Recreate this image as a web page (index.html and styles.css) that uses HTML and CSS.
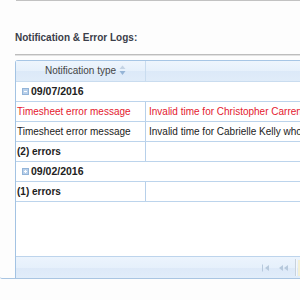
FILE: index.html
```html
<!DOCTYPE html>
<html lang="en">

<head>
  <meta charset="UTF-8">
  <title>Notification &amp; Error Logs</title>
  <link rel="stylesheet" href="styles.css">
</head>

<body>

  <div class="page">
    <div class="prev-rule"></div>
    <h2 class="section-title">Notification &amp; Error Logs:</h2>
    <div class="section-rule"></div>

    <div class="panel">
      <div class="grid">
        <div class="grid-head">
          <div class="head-cell head-type">
            Notification type<svg class="sort-icon" width="7" height="11" viewBox="0 0 7 11">
              <path d="M3.5 0.5 L6.5 4 L0.5 4 Z" fill="#c3d3e4" />
              <path d="M0.5 6 L6.5 6 L3.5 10 Z" fill="#95b4d6" />
            </svg>
          </div>
          <div class="head-cell head-msg"></div>
        </div>

        <!-- group 09/07/2016 -->
        <div class="grid-row group-row">
          <div class="cell cell-group">
            <svg class="group-icon" width="7" height="7" viewBox="0 0 7 7">
              <rect x="0.5" y="0.5" width="6" height="6" fill="#b9d0ea" stroke="#93b4d8" />
              <path d="M2 3.5 H5" stroke="#ffffff" />
            </svg>
            09/07/2016
          </div>
        </div>
        <div class="grid-row error-row">
          <div class="cell cell-type">Timesheet error message</div>
          <div class="cell cell-msg">Invalid time for Christopher Carrens who entered more than 24 hours</div>
        </div>
        <div class="grid-row">
          <div class="cell cell-type">Timesheet error message</div>
          <div class="cell cell-msg">Invalid time for Cabrielle Kelly who entered more than 24 hours</div>
        </div>
        <div class="grid-row total-row">
          <div class="cell cell-type">(2) errors</div>
          <div class="cell cell-msg"></div>
        </div>

        <!-- group 09/02/2016 -->
        <div class="grid-row group-row">
          <div class="cell cell-group">
            <svg class="group-icon" width="7" height="7" viewBox="0 0 7 7">
              <rect x="0.5" y="0.5" width="6" height="6" fill="#b9d0ea" stroke="#93b4d8" />
              <path d="M2 3.5 H5 M3.5 2 V5" stroke="#ffffff" />
            </svg>
            09/02/2016
          </div>
        </div>
        <div class="grid-row total-row">
          <div class="cell cell-type">(1) errors</div>
          <div class="cell cell-msg"></div>
        </div>

        <div class="grid-fill"></div>

        <div class="pager">
          <svg class="pager-first" width="8" height="8" viewBox="0 0 8 8">
            <path d="M0.5 0.5 V7.5" stroke="#b7c9dc" />
            <path d="M7 1 L7 7 L3 4 Z" fill="#b7c9dc" />
          </svg>
          <svg class="pager-prev" width="11" height="8" viewBox="0 0 11 8">
            <path d="M5 1 L5 7 L1 4 Z" fill="#b7c9dc" />
            <path d="M10 1 L10 7 L6 4 Z" fill="#b7c9dc" />
          </svg>
          <span class="pager-sep"></span>
          <span class="pager-page"></span>
        </div>
      </div>
    </div>
  </div>

</body>

</html>
```

FILE: styles.css
```css
html,
body {
  margin: 0;
  overflow: hidden;
  background: #fdfdfd;
}

body {
  width: 300px;
  height: 300px;
  font-family: "Liberation Sans", Arial, sans-serif;
  color: #222;
}

.page {
  padding-left: 15px;
}

.prev-rule {
  margin-left: 1px;
  border-top: 1px solid #c2c2c2;
}

.section-title {
  margin: 31px 0 0;
  font-size: 10px;
  line-height: 12px;
  font-weight: bold;
  color: #3b3e4a;
}

.section-rule {
  margin-top: 10px;
  border-top: 1px solid #bdbdbd;
  border-bottom: 1px solid #e2e2e2;
}

.panel {
  margin: 4px 0 0 -15px;
  padding-left: 15px;
  border-bottom: 1px solid #a9c5e2;
  border-bottom-left-radius: 2px;
}

.grid {
  width: 420px;
  border-top: 1px solid #a7c6e5;
  border-left: 1px solid #a3c3e3;
  border-top-left-radius: 3px;
  background: #fff;
}

.grid-head {
  display: flex;
  height: 21px;
  box-sizing: border-box;
  border-bottom: 1px solid #c9dcef;
  background: linear-gradient(#eef5fd, #e6f0fb 50%, #dce9f8 52%, #e0ecf9);
  font-size: 10px;
  color: #444;
}

.head-cell {
  line-height: 20px;
  white-space: nowrap;
}

.head-type {
  width: 130px;
  box-sizing: border-box;
  border-right: 1px solid #c9dcef;
  text-align: center;
}

.sort-icon {
  vertical-align: -2px;
  margin-left: 3px;
  margin-right: -10px;
}

.grid-row {
  display: flex;
  height: 20px;
  box-sizing: border-box;
  border-bottom: 1px solid #bcd4ec;
  font-size: 10px;
}

.cell {
  line-height: 19px;
  white-space: nowrap;
  overflow: hidden;
}

.cell-type {
  width: 130px;
  box-sizing: border-box;
  padding-left: 1px;
  border-right: 1px solid #b7d0ea;
}

.cell-msg {
  flex: 1;
  padding-left: 3px;
}

.error-row {
  color: #e4202f;
}

.total-row .cell-type {
  font-weight: bold;
}

.cell-group {
  display: flex;
  align-items: center;
  gap: 2px;
  padding-left: 6px;
  font-weight: bold;
  font-size: 10.5px;
}

.grid-fill {
  height: 54px;
}

.pager {
  display: flex;
  align-items: center;
  height: 22px;
  box-sizing: border-box;
  padding-left: 246px;
  border-top: 1px solid #bdd4ec;
  background: linear-gradient(#ecf4fd, #e6f0fb 50%, #dde9f8 52%, #e1edfa);
}

.pager-prev {
  margin-left: 8px;
}

.pager-sep {
  width: 1px;
  height: 17px;
  margin-left: 6px;
  background: #c8d2dc;
  border-right: 1px solid #f4f8fc;
}

.pager-page {
  width: 20px;
  height: 16px;
  margin-left: 1px;
  background: #f3f0d6;
}
```
